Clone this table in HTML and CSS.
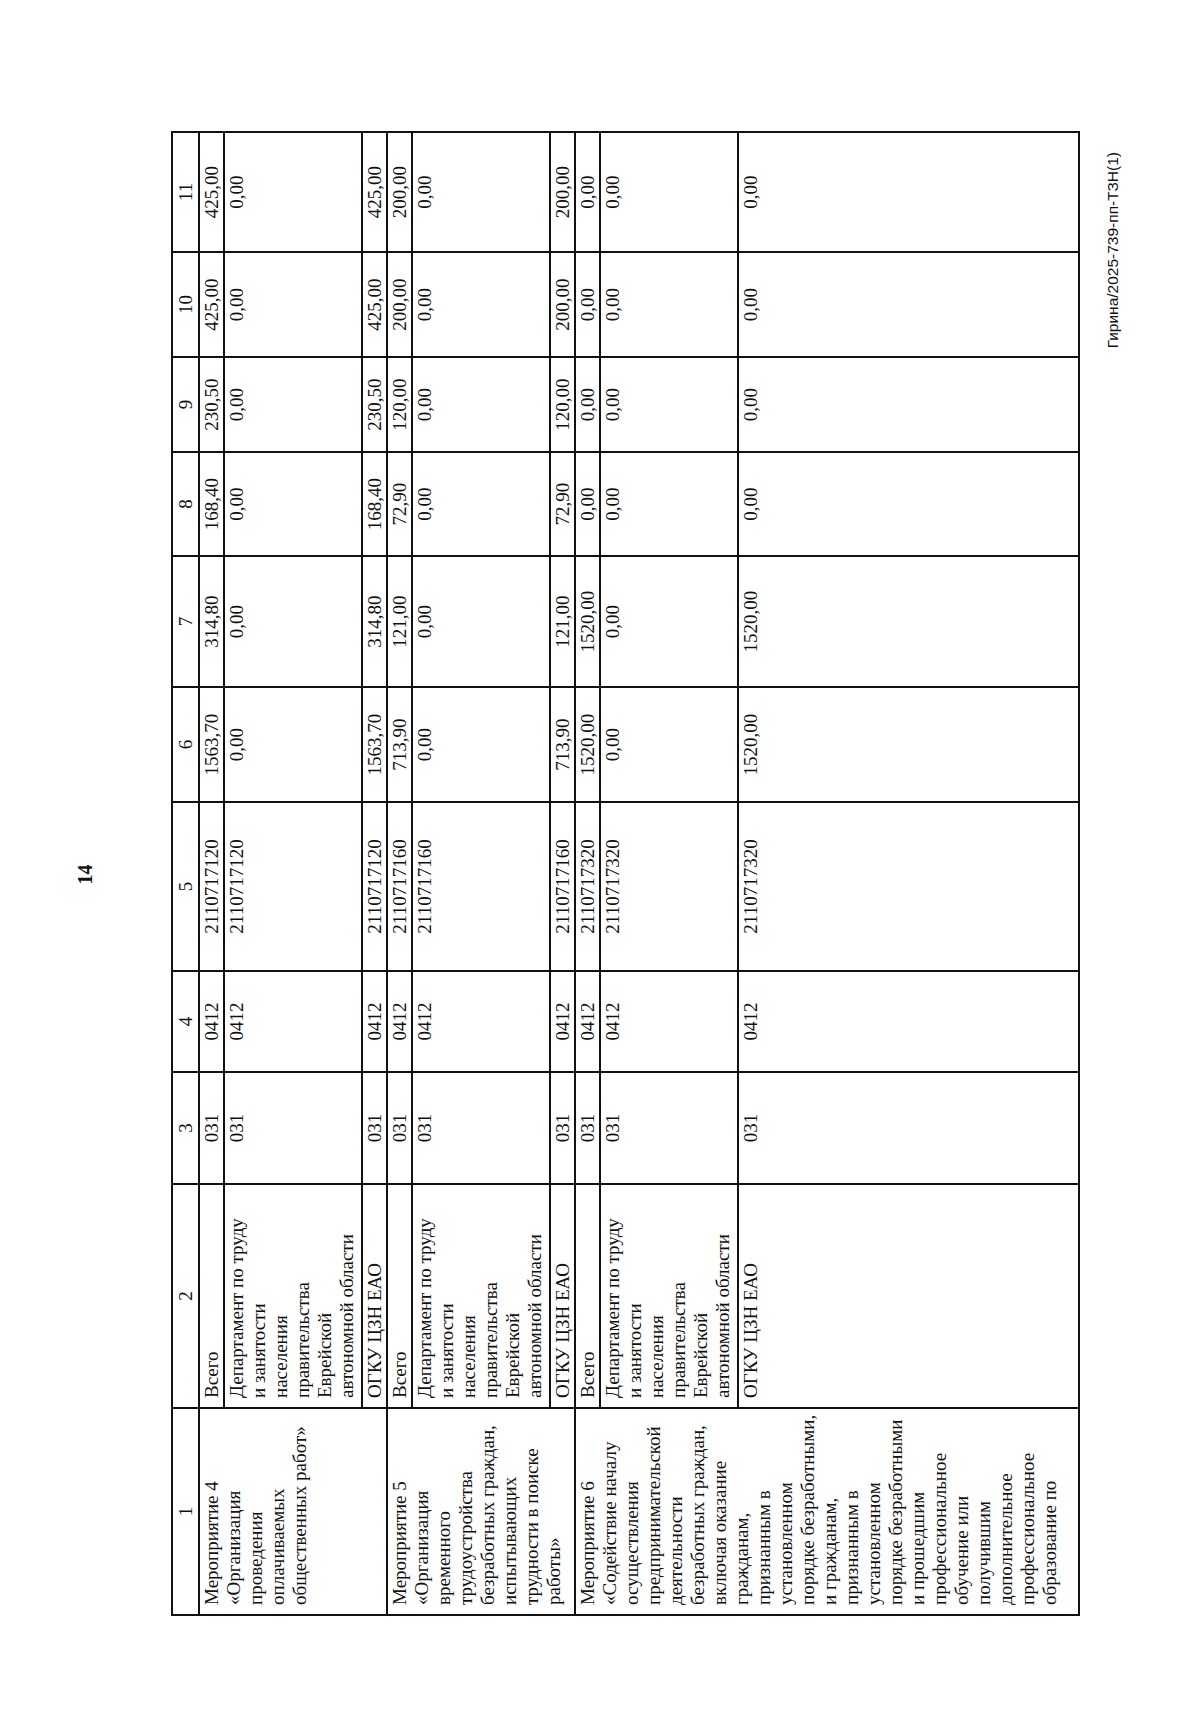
FILE: index.html
```html
<!DOCTYPE html>
<html lang="ru">
<head>
    <meta charset="UTF-8">
    <title>14</title>
    <link rel="stylesheet" href="styles.css">
</head>
<body>
    <div class="sheet">
        <div class="page-num">14</div>
        <table class="budget">
            <colgroup>
                <col class="c1"><col class="c2"><col class="c3"><col class="c4"><col class="c5"><col class="c6">
                <col class="c7"><col class="c8"><col class="c9"><col class="c10"><col class="c11">
            </colgroup>
            <tr class="head">
                <td>1</td><td>2</td><td>3</td><td>4</td><td>5</td><td>6</td><td>7</td><td>8</td><td>9</td><td>10</td><td>11</td>
            </tr>

            <!-- Мероприятие 4 -->
            <tr class="total">
                <td class="name" rowspan="3">Мероприятие 4<br>«Организация<br>проведения<br>оплачиваемых<br>общественных работ»</td>
                <td class="name">Всего</td>
                <td>031</td><td>0412</td><td>2110717120</td><td>1563,70</td><td>314,80</td><td>168,40</td><td>230,50</td><td>425,00</td><td>425,00</td>
            </tr>
            <tr class="dep">
                <td class="name">Департамент по труду<br>и занятости<br>населения<br>правительства<br>Еврейской<br>автономной области</td>
                <td>031</td><td>0412</td><td>2110717120</td><td>0,00</td><td>0,00</td><td>0,00</td><td>0,00</td><td>0,00</td><td>0,00</td>
            </tr>
            <tr class="ogku">
                <td class="name">ОГКУ ЦЗН ЕАО</td>
                <td>031</td><td>0412</td><td>2110717120</td><td>1563,70</td><td>314,80</td><td>168,40</td><td>230,50</td><td>425,00</td><td>425,00</td>
            </tr>

            <!-- Мероприятие 5 -->
            <tr class="total">
                <td class="name" rowspan="3">Мероприятие 5<br>«Организация<br>временного<br>трудоустройства<br>безработных граждан,<br>испытывающих<br>трудности в поиске<br>работы»</td>
                <td class="name">Всего</td>
                <td>031</td><td>0412</td><td>2110717160</td><td>713,90</td><td>121,00</td><td>72,90</td><td>120,00</td><td>200,00</td><td>200,00</td>
            </tr>
            <tr class="dep">
                <td class="name">Департамент по труду<br>и занятости<br>населения<br>правительства<br>Еврейской<br>автономной области</td>
                <td>031</td><td>0412</td><td>2110717160</td><td>0,00</td><td>0,00</td><td>0,00</td><td>0,00</td><td>0,00</td><td>0,00</td>
            </tr>
            <tr class="ogku">
                <td class="name">ОГКУ ЦЗН ЕАО</td>
                <td>031</td><td>0412</td><td>2110717160</td><td>713,90</td><td>121,00</td><td>72,90</td><td>120,00</td><td>200,00</td><td>200,00</td>
            </tr>

            <!-- Мероприятие 6 -->
            <tr class="total">
                <td class="name" rowspan="3">Мероприятие 6<br>«Содействие началу<br>осуществления<br>предпринимательской<br>деятельности<br>безработных граждан,<br>включая оказание<br>гражданам,<br>признанным в<br>установленном<br>порядке безработными,<br>и гражданам,<br>признанным в<br>установленном<br>порядке безработными<br>и прошедшим<br>профессиональное<br>обучение или<br>получившим<br>дополнительное<br>профессиональное<br>образование по</td>
                <td class="name">Всего</td>
                <td>031</td><td>0412</td><td>2110717320</td><td>1520,00</td><td>1520,00</td><td>0,00</td><td>0,00</td><td>0,00</td><td>0,00</td>
            </tr>
            <tr class="dep">
                <td class="name">Департамент по труду<br>и занятости<br>населения<br>правительства<br>Еврейской<br>автономной области</td>
                <td>031</td><td>0412</td><td>2110717320</td><td>0,00</td><td>0,00</td><td>0,00</td><td>0,00</td><td>0,00</td><td>0,00</td>
            </tr>
            <tr class="ogku last">
                <td class="name">ОГКУ ЦЗН ЕАО</td>
                <td>031</td><td>0412</td><td>2110717320</td><td>1520,00</td><td>1520,00</td><td>0,00</td><td>0,00</td><td>0,00</td><td>0,00</td>
            </tr>
        </table>
        <div class="doc-code">Гирина/2025-739-пп-ТЗН(1)</div>
    </div>
</body>
</html>
```

FILE: styles.css
```css
html {
    overflow: hidden;
    background: #fff;
}

body {
    margin: 0;
    padding: 0;
    width: 1200px;
    height: 1712px;
    overflow: hidden;
}

/* the scanned page is landscape, turned on its side */
.sheet {
    width: 1712px;
    height: 1200px;
    box-sizing: border-box;
    padding: 73px 0 0 96px;
    transform-origin: 0 0;
    transform: translateY(1712px) rotate(-90deg);
    font-family: "Liberation Serif", "Times New Roman", serif;
    color: #111;
}

.page-num {
    width: 1483px;
    text-align: center;
    font-size: 20px;
    font-weight: bold;
    line-height: 24px;
    margin-bottom: 74px;
}

.budget {
    width: 1483px;
    border-collapse: collapse;
    table-layout: fixed;
    font-size: 19px;
    line-height: 22px;
}

.budget td {
    border: 2px solid #111;
    padding: 1px 4px 0;
    text-align: center;
    vertical-align: top;
    white-space: nowrap;
    overflow: hidden;
}

.budget td.name {
    text-align: left;
    padding-left: 9px;
}

.budget .head td {
    height: 25px;
    padding: 0;
    vertical-align: middle;
}

.budget .total td { height: 21px; }
.budget .dep td { height: 135px; }
.budget .ogku td { height: 19px; }
.budget .last td { height: 338px; }
.budget td[rowspan] { height: auto; }

.c1 { width: 207px; }
.c2 { width: 224px; }
.c3 { width: 112px; }
.c4 { width: 101px; }
.c5 { width: 169px; }
.c6 { width: 115px; }
.c7 { width: 131px; }
.c8 { width: 104px; }
.c9 { width: 95px; }
.c10 { width: 105px; }
.c11 { width: 120px; }

.doc-code {
    width: 1483px;
    box-sizing: border-box;
    margin-top: 24px;
    padding-right: 19px;
    text-align: right;
    font-family: "Liberation Sans", Arial, sans-serif;
    font-size: 15.5px;
    line-height: 18px;
}
```
